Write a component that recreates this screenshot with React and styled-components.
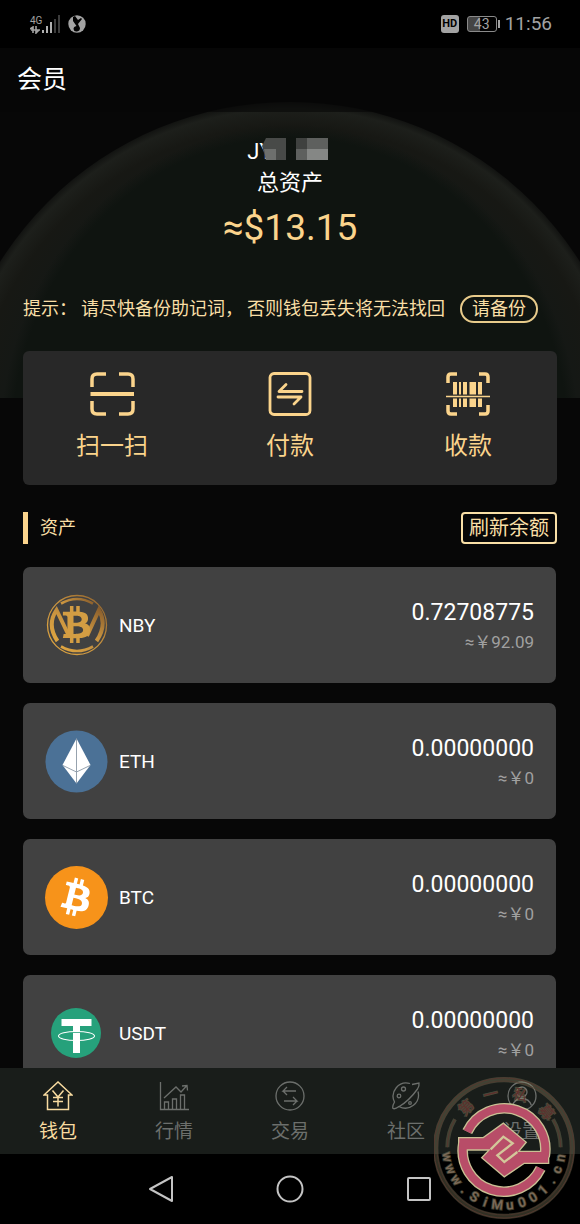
import React from "react"
import styled, { createGlobalStyle } from "styled-components"
import { FaBitcoin, FaBtc } from "react-icons/fa"

const GOLD = "#fbd48c"

const GlobalStyle = createGlobalStyle`
  * {
    box-sizing: border-box;
  }
  body {
    margin: 0;
    background: #000;
    font-family: Roboto, "Noto Sans CJK SC", sans-serif;
  }
  button {
    margin: 0;
    padding: 0;
    border: 0;
    background: none;
    font-family: inherit;
    cursor: pointer;
  }
  svg {
    display: block;
  }
`

const Screen = styled.div`
  position: relative;
  display: flex;
  flex-direction: column;
  height: 100vh;
  overflow: hidden;
`

/* ---- status bar ---- */

const StatusBar = styled.div`
  display: flex;
  flex: none;
  align-items: center;
  justify-content: space-between;
  height: 48px;
  padding: 0 28px 0 30px;
  background: #000;
  color: #a3a3a3;
`

const StatusGroup = styled.div`
  display: flex;
  align-items: center;
  gap: ${props => props.gap};
`

const Network = styled.div`
  display: flex;
  flex-direction: column;
  font-size: 10px;
  line-height: 11px;
`

const HdBadge = styled.span`
  width: 18px;
  border-radius: 3px;
  background: #a3a3a3;
  color: #000;
  font-size: 11px;
  font-weight: 700;
  line-height: 18px;
  text-align: center;
`

const Battery = styled.span`
  position: relative;
  width: 30px;
  border: 1px solid #8a8a8a;
  border-radius: 3px;
  background: linear-gradient(90deg, #444 43%, #000 43%);
  font-size: 14px;
  line-height: 14px;
  text-align: center;
  &::after {
    content: "";
    position: absolute;
    top: 3px;
    right: -4px;
    width: 2px;
    height: 8px;
    background: #a3a3a3;
  }
`

const Clock = styled.span`
  font-size: 19px;
  line-height: 24px;
`

/* ---- wallet ---- */

const Main = styled.main`
  position: relative;
  flex: 1;
  min-height: 0;
  overflow: hidden;
  background: #070707;
`

const Arc = styled.svg`
  position: absolute;
  top: 0;
  left: 0;
  width: 100%;
  height: 350px;
`

const Content = styled.div`
  position: relative;
  padding: 0 23px;
`

const Title = styled.h1`
  margin: 0;
  padding: 0 17px;
  color: #fff;
  font-size: 25px;
  font-weight: 400;
  line-height: 64px;
  position: relative;
`

const Summary = styled.section`
  display: flex;
  flex-direction: column;
  align-items: center;
  padding: 26px 0 45px;
  color: #fff;
`

const Owner = styled.div`
  display: flex;
  font-size: 22px;
  line-height: 28px;
  svg {
    margin-left: -11px;
  }
`

const SummaryLabel = styled.div`
  font-size: 22px;
  line-height: 34px;
`

const Total = styled.div`
  padding-top: 6px;
  color: ${GOLD};
  font-size: 37px;
  line-height: 44px;
`

const Tip = styled.div`
  display: flex;
  align-items: center;
  gap: 4px;
  margin-bottom: 28px;
  color: #f9dfa6;
  font-size: 18px;
  line-height: 28px;
  white-space: nowrap;
`

const BackupButton = styled.button`
  height: 28px;
  margin-left: 11px;
  padding: 0 10px;
  border: 2px solid #e8cb8b;
  border-radius: 14px;
  color: #f9dfa6;
  font-size: 18px;
  line-height: 24px;
`

const Actions = styled.div`
  display: grid;
  grid-template-columns: repeat(3, 1fr);
  border-radius: 6px;
  background: #282828;
`

const Action = styled.button`
  display: flex;
  flex-direction: column;
  align-items: center;
  gap: 13px;
  padding: 20px 0 23px;
  color: ${GOLD};
  font-size: 24px;
  line-height: 32px;
`

const SectionHead = styled.div`
  display: flex;
  align-items: center;
  justify-content: space-between;
  margin: 27px 0 23px;
`

const SectionTitle = styled.h2`
  margin: 0;
  padding-left: 12px;
  border-left: 5px solid ${GOLD};
  color: #f9dfa6;
  font-size: 18px;
  font-weight: 400;
  line-height: 32px;
`

const RefreshButton = styled.button`
  height: 32px;
  padding: 0 6px;
  border: 2px solid #f9dfa6;
  border-radius: 4px;
  color: #f9dfa6;
  font-size: 20px;
  line-height: 28px;
`

const AssetList = styled.ul`
  display: flex;
  flex-direction: column;
  gap: 20px;
  margin: 0;
  padding: 0 1px 20px 0;
  list-style: none;
`

const Asset = styled.li`
  display: flex;
  align-items: center;
  height: 116px;
  padding: 0 22px;
  border-radius: 7px;
  background: #414141;
`

const Coin = styled.div`
  display: flex;
  justify-content: center;
  width: 63px;
  margin-right: 11px;
`

const BtcDisc = styled.div`
  border-radius: 50%;
  background: radial-gradient(#fff 60%, #f7931a 61%);
  color: #f7931a;
`

const AssetName = styled.span`
  flex: 1;
  color: #fff;
  font-size: 19px;
`

const Balance = styled.div`
  padding-top: 4px;
  color: #fff;
  font-size: 23px;
  line-height: 30px;
  text-align: right;
`

const Worth = styled.div`
  color: #a0a0a0;
  font-size: 17px;
  line-height: 28px;
`

/* ---- bottom bars ---- */

const TabBar = styled.nav`
  display: grid;
  flex: none;
  grid-template-columns: repeat(5, 1fr);
  background: #191d1a;
`

const Tab = styled.a`
  display: flex;
  flex-direction: column;
  align-items: center;
  gap: 7px;
  padding: 13px 0 8px;
  color: ${props => (props.$active ? "#f8dba0" : "#6c6f6c")};
  font-size: 19px;
  line-height: 28px;
  text-decoration: none;
`

const SystemNav = styled.div`
  display: grid;
  flex: none;
  grid-template-columns: repeat(3, 129px);
  align-items: center;
  justify-content: center;
  height: 70px;
  background: #000;
`

const SystemButton = styled.button`
  display: flex;
  justify-content: center;
  color: #c4c4c4;
`

const Stamp = styled.svg`
  position: absolute;
  right: 4px;
  bottom: 5px;
  pointer-events: none;
`

/* ---- drawings ---- */

const Line = ({ size = 30, box = 30, width = 1.3, children }) => (
  <svg width={size} height={size} viewBox={`0 0 ${box} ${box}`} fill="none"
    stroke="currentColor" strokeWidth={width} aria-hidden="true">
    {children}
  </svg>
)

const ScanIcon = () => (
  <Line size={46} box={46} width={3.5}>
    <path d="M3 16V8q0-5 5-5h9M30 3h9q5 0 5 5v8M3 30v8q0 5 5 5h9M30 43h9q5 0 5-5v-8" />
    <path d="M1.500 23h43.500" strokeWidth="4.200" />
  </Line>
)

const PayIcon = () => (
  <Line size={46} box={46} width={2.8}>
    <rect x="3" y="2.500" width="40" height="41" rx="4" />
    <path d="M35 20.500H12l7-7M11 26h23l-7 7" strokeLinejoin="round" strokeLinecap="round" />
  </Line>
)

const ReceiveIcon = () => (
  <Line size={46} box={46} width={3.5}>
    <path d="M3 12V6q0-3 3-3h6M34 3h6q3 0 3 3v6M3 34v6q0 3 3 3h6M34 43h6q3 0 3-3v-6" />
    <path d="M1 25.500h44" strokeWidth="1.600" />
    <g fill="currentColor" stroke="none">
      <path d="M8 11h4v12.500H8zM14 11h2v12.500h-2zM18 11h4v12.500h-4zM24.500 11h6.500v12.500h-6.500zM33 11h4v12.500h-4z" />
      <path d="M8 27.500h4v8.500H8zM14 27.500h2v8.500h-2zM18 27.500h4v8.500h-4zM24.500 27.500h6.500v8.500h-6.500zM33 27.500h4v8.500h-4z" />
    </g>
  </Line>
)

const NbyCoin = () => (
  <svg width="62" height="62" viewBox="0 0 62 62" fill="none" aria-hidden="true">
    <defs>
      <linearGradient id="nby" x1="0" y1="1" x2="1" y2="0">
        <stop offset="0" stopColor="#e0a640" />
        <stop offset="0.5" stopColor="#c99440" />
        <stop offset="1" stopColor="#8a5e2c" />
      </linearGradient>
    </defs>
    <g stroke="url(#nby)">
      <circle cx="31" cy="31" r="29.500" strokeWidth="1.300" />
      <path d="M15 9.500Q31 .5 47 9.500M15 52.500Q31 61.500 47 52.500" strokeWidth="2.600" />
      <path d="M11.500 47Q.5 31 10.500 16l12 25M50.500 47Q61.500 31 53 16L41 42" strokeWidth="4" />
    </g>
    <FaBtc size={37} x="12" y="12" color="#d39d43" />
  </svg>
)

const EthCoin = () => (
  <svg width="63" height="63" viewBox="0 0 63 63" aria-hidden="true">
    <circle cx="31.500" cy="31.500" r="31" fill="#4b7196" />
    <path d="M31.500 8.500 45.500 35 31.500 53.500 17.500 35z" fill="#fff" />
    <path d="M31.500 8.500V53M18 35.500l13.500 6.500L45 35.500" fill="none" stroke="#8a97a5" strokeWidth="0.900" />
  </svg>
)

const BtcCoin = () => (
  <BtcDisc>
    <FaBitcoin size={63} />
  </BtcDisc>
)

const UsdtCoin = () => (
  <svg width="54" height="50" viewBox="-1 0 54 50" aria-hidden="true">
    <circle cx="25" cy="25" r="25" fill="#26a17b" />
    <path d="M10.500 11h30v7h-11.500v27h-7V18h-11.500z" fill="#fff" />
    <ellipse cx="25.500" cy="28" rx="18" ry="4.500" fill="none" stroke="#fff" strokeWidth="1.100" />
    <path d="M22 24.500h7" stroke="#26a17b" strokeWidth="0.800" />
  </svg>
)

const HomeIcon = () => (
  <Line width={1.5}>
    <path d="M1 14 15 1l14 13h-3.500v14.500h-21V14zM9.500 9.500 15 16l5.500-6.500M10 16.500h10M10 20.500h10M15 16v9.500" />
  </Line>
)

const ChartIcon = () => (
  <Line>
    <path d="M1.500 1v27.500H30M5.500 28v-7h4v7M13.500 28V18h4v10M21.500 28V14h4v14" />
    <path d="m5 17 12-11 5 5 5.500-6M23 5l5-.5.500 5" />
  </Line>
)

const TradeIcon = () => (
  <Line>
    <circle cx="15" cy="15" r="14" />
    <path d="M21 10H8l4-4M8 10l4 4M9 20h13l-4-4M22 20l-4 4" />
  </Line>
)

const PlanetIcon = () => (
  <Line>
    <path d="M19 2.500A13.200 13.200 0 0 0 3.500 21Q1 25.500 2 27.500q2 1 6-2A13.200 13.200 0 0 0 27 10.500" />
    <path d="M21 3.500 28 2q.5 3-1.500 6Q18 20 7.500 26" />
    <circle cx="12.500" cy="8" r="2" />
    <circle cx="8" cy="15" r="1.800" />
    <circle cx="19" cy="22" r="1.300" />
  </Line>
)

const UserIcon = () => (
  <Line>
    <circle cx="15" cy="15" r="14" />
    <circle cx="15" cy="11" r="5" />
    <path d="M5.500 24.500Q8 17.500 15 17.500t9.500 7" />
  </Line>
)

const Blocks = () => (
  <svg width="71" height="22" viewBox="0 0 71 22" aria-hidden="true">
    <path d="M4 0h20v22H4L0 8z" fill="#484a48" />
    <path d="M2 11h12v11H4z" fill="#6d6f6d" />
    <path d="M34 0h32v22H34z" fill="#5e605e" />
    <path d="M34 0h11v11H34z" fill="#3f413f" />
    <path d="M45 11h21v11H45z" fill="#858785" />
  </svg>
)

const HeroArc = () => (
  <Arc viewBox="0 0 580 350" preserveAspectRatio="none" aria-hidden="true">
    <defs>
      <radialGradient id="rim" gradientUnits="userSpaceOnUse" cx="290" cy="397" r="343">
        <stop offset="0.850" stopColor="#151815" />
        <stop offset="0.930" stopColor="#171814" />
        <stop offset="0.980" stopColor="#1d1f1b" />
        <stop offset="1" stopColor="#121311" />
      </radialGradient>
      <radialGradient id="bowl">
        <stop offset="0.960" stopColor="#0f1410" />
        <stop offset="1" stopColor="#0f1410" stopOpacity="0" />
      </radialGradient>
    </defs>
    <circle cx="290" cy="397" r="343" fill="url(#rim)" />
    <ellipse cx="290" cy="397" rx="290" ry="320" fill="url(#bowl)" />
    <path d="M0 0h580v64H0z" fill="#070707" opacity="0.600" />
  </Arc>
)

const SITE = "www.SiMu001.cn".split("")
const SEAL = [["第", -43], ["一", -14], ["私", 17], ["募", 50]]
const EMBLEM = "M178 235h72l60-43 66 55-24 29h92v32h-72l-59 40-65-55 24-25h-94z"
const EMBLEM_RING = "M202 215A123 123 0 0 1 434 290M422 325A123 123 0 0 1 190 250"

const StampLogo = () => (
  <Stamp width="142" height="142" viewBox="102 51 426 426" fill="none" aria-hidden="true">
    <g stroke="#8c8a66" strokeOpacity="0.350">
      <circle cx="312" cy="264" r="205" strokeWidth="16" />
      <path d="M142 262A170 170 0 0 1 165 178M482 262A170 170 0 0 0 459 178" strokeWidth="12" />
    </g>
    <g stroke="#54382f">
      <circle cx="312" cy="264" r="210" strokeWidth="3" />
      <circle cx="312" cy="264" r="201" strokeWidth="2" />
      <path d="M142 262A170 170 0 0 1 165 178M482 262A170 170 0 0 0 459 178" strokeWidth="3" />
    </g>
    <g textAnchor="middle" stroke="#a5a078" paintOrder="stroke">
      {SEAL.map(([char, angle]) => (
        <text key={char} x="312" y="113" fill="#5e302d" strokeOpacity="0.350" strokeWidth="5"
          fontSize="44" transform={`rotate(${angle} 312 264)`}>{char}</text>
      ))}
      {SITE.map((char, i) => (
        <text key={i} x="312" y="449" fill="#7c6a58" strokeOpacity="0.350" strokeWidth="5"
          fontSize="40" fontWeight="500" transform={`rotate(${81 - i * 12.4} 312 264)`}>{char}</text>
      ))}
    </g>
    <path d={EMBLEM_RING} stroke="#c9c094" strokeWidth="32" />
    <path d={EMBLEM} stroke="#c9c094" strokeWidth="8" />
    <path d={EMBLEM_RING} stroke="#b84d68" strokeWidth="24" />
    <path d={EMBLEM} fill="#b84d68" />
    <path d="m272 268 38-38 28 20-46 36 21 20 39-30" stroke="#d3c79a" strokeWidth="7" />
  </Stamp>
)

const actions = [
  { label: "扫一扫", Icon: ScanIcon },
  { label: "付款", Icon: PayIcon },
  { label: "收款", Icon: ReceiveIcon },
]

const assets = [
  { name: "NBY", Icon: NbyCoin, balance: "0.72708775", worth: "92.09" },
  { name: "ETH", Icon: EthCoin, balance: "0.00000000", worth: "0" },
  { name: "BTC", Icon: BtcCoin, balance: "0.00000000", worth: "0" },
  { name: "USDT", Icon: UsdtCoin, balance: "0.00000000", worth: "0" },
]

const tabs = [
  { label: "钱包", Icon: HomeIcon, active: true },
  { label: "行情", Icon: ChartIcon },
  { label: "交易", Icon: TradeIcon },
  { label: "社区", Icon: PlanetIcon },
  { label: "设置", Icon: UserIcon },
]

const App = () => (
  <Screen>
    <GlobalStyle />
    <StatusBar>
      <StatusGroup gap="8px">
        <StatusGroup gap="0">
          <Network>
            <span>4G</span>
            <svg width="11" height="8" viewBox="0 0 11 8" fill="none" stroke="currentColor" strokeWidth="1.600" aria-hidden="true">
              <path d="M0 3l3-2v6M6 0v7l3-3M1 4h9" />
            </svg>
          </Network>
          <svg width="18" height="18" viewBox="0 0 18 18" aria-hidden="true">
            <path d="M0 15h2v3H0zM4 11h2v7H4zM8 7h2v11H8z" fill="#b0b0b0" />
            <path d="M12 4h2v14h-2zM16 0h2v18h-2z" fill="#3c3c3c" />
          </svg>
        </StatusGroup>
        <svg width="18" height="18" viewBox="0 0 18 18" aria-hidden="true">
          <circle cx="9" cy="9" r="8.700" fill="#a3a3a3" />
          <path d="M5 2l2-1 3 4 3-2 1 1-4 5 2 4q0 3-3 3.500T5.500 14q0-2.500 3-3L5 6z" fill="#000" />
        </svg>
      </StatusGroup>
      <StatusGroup gap="8px">
        <HdBadge>HD</HdBadge>
        <Battery>43</Battery>
        <Clock>11:56</Clock>
      </StatusGroup>
    </StatusBar>

    <Main>
      <HeroArc />
      <Title>会员</Title>
      <Content>
        <Summary>
          <Owner>JY<Blocks /></Owner>
          <SummaryLabel>总资产</SummaryLabel>
          <Total>≈$13.15</Total>
        </Summary>
        <Tip>
          <span>提示：</span>
          <span>请尽快备份助记词，</span>
          <span>否则钱包丢失将无法找回</span>
          <BackupButton>请备份</BackupButton>
        </Tip>
        <Actions>
          {actions.map(({ label, Icon }) => (
            <Action key={label}><Icon />{label}</Action>
          ))}
        </Actions>
        <SectionHead>
          <SectionTitle>资产</SectionTitle>
          <RefreshButton>刷新余额</RefreshButton>
        </SectionHead>
        <AssetList>
          {assets.map(({ name, Icon, balance, worth }) => (
            <Asset key={name}>
              <Coin><Icon /></Coin>
              <AssetName>{name}</AssetName>
              <Balance>
                {balance}
                <Worth>≈￥{worth}</Worth>
              </Balance>
            </Asset>
          ))}
        </AssetList>
      </Content>
    </Main>

    <TabBar>
      {tabs.map(({ label, Icon, active }) => (
        <Tab key={label} href="#" $active={active}><Icon />{label}</Tab>
      ))}
    </TabBar>

    <SystemNav>
      <SystemButton aria-label="返回">
        <Line size={28} box={28} width={2}><path d="M25 2v24L3 14z" strokeLinejoin="round" /></Line>
      </SystemButton>
      <SystemButton aria-label="主页">
        <Line size={28} box={28} width={2}><circle cx="14" cy="14" r="12.500" /></Line>
      </SystemButton>
      <SystemButton aria-label="最近任务">
        <Line size={28} box={28} width={2}><rect x="3" y="3" width="22" height="22" rx="1" /></Line>
      </SystemButton>
    </SystemNav>
    <StampLogo />
  </Screen>
)

export default App
